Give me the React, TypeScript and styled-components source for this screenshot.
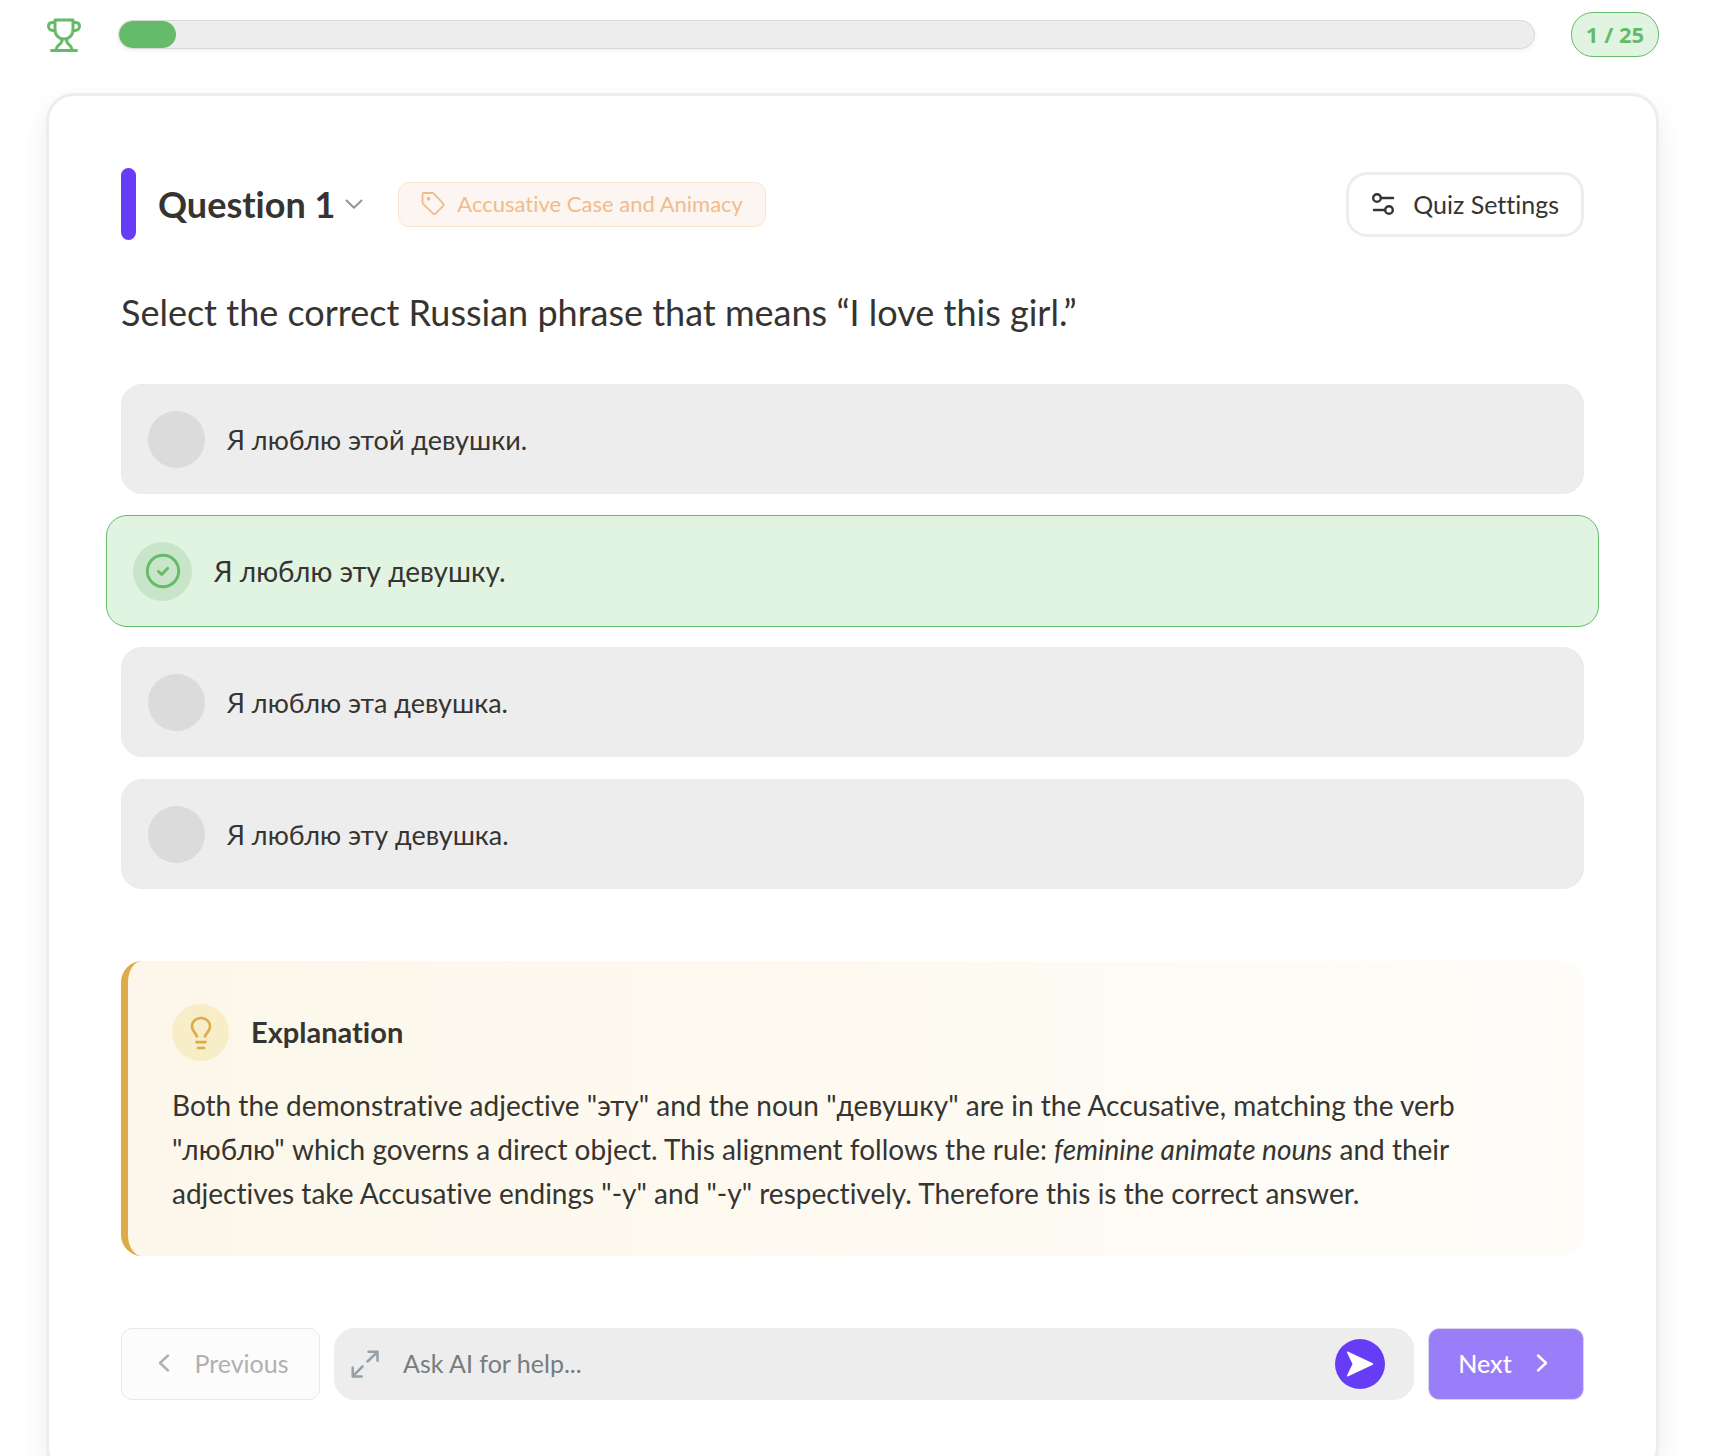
import React, { useState } from 'react';
import styled, { createGlobalStyle, css } from 'styled-components';

const colors = {
  ink: '#363430',
  muted: '#767c7f',
  purple: '#673cf6',
  purpleSoft: '#9a7df8',
  green: '#66bb6a',
  greenSoft: '#e1f4e2',
  grey: '#ededed',
  gold: '#dfab4a',
  peach: '#efbc8a',
};

const GlobalStyle = createGlobalStyle`
  *, *::before, *::after { box-sizing: border-box; }
  body {
    margin: 0;
    background: #fff;
    color: ${colors.ink};
    font-family: Lato, "Noto Sans", sans-serif;
    font-size: 28px;
    font-variant-ligatures: none;
  }
  button, input { font: inherit; font-variant-ligatures: none; color: inherit; }
  button { cursor: pointer; }
  svg { display: block; flex: none; }
`;

const Page = styled.main`
  height: 100vh;
  overflow: hidden;
  padding: 12px 50px 0 46px;
`;

const ProgressHeader = styled.header`
  display: flex;
  align-items: center;
  gap: 36px;
`;

const Track = styled.div`
  flex: 1;
  height: 29px;
  border: 1px solid #d9d9d9;
  border-radius: 15px;
  background: ${colors.grey};
  box-shadow: 0 2px 4px rgba(0, 0, 0, 0.06);
  overflow: hidden;
`;

const Fill = styled.div`
  height: 100%;
  border-radius: 14px;
  background: ${colors.green};
`;

const Counter = styled.span`
  display: grid;
  place-items: center;
  height: 45px;
  min-width: 88px;
  border: 1px solid ${colors.green};
  border-radius: 22px;
  background: ${colors.greenSoft};
  color: ${colors.green};
  font-family: "Noto Sans", sans-serif;
  font-size: 22px;
  line-height: 28px;
  font-weight: 700;
  padding-bottom: 2px;
`;

const Card = styled.section`
  margin-top: 36px;
  padding: 72px;
  border: 3px solid ${colors.grey};
  border-radius: 28px;
  box-shadow: 0 12px 26px rgba(40, 60, 40, 0.09);
`;

const CardHeader = styled.div`
  display: flex;
  align-items: center;
`;

const Accent = styled.span`
  width: 15px;
  height: 72px;
  border-radius: 8px;
  background: ${colors.purple};
`;

const Title = styled.h1`
  margin: 0 34px 0 22px;
  font-size: 36px;
  line-height: 44px;
`;

const TitleButton = styled.button`
  display: flex;
  align-items: center;
  gap: 9px;
  padding: 0;
  border: 0;
  background: none;
  font-weight: 700;
`;

const Topic = styled.span`
  display: flex;
  align-items: center;
  gap: 12px;
  height: 45px;
  padding: 0 22px 2px;
  border: 1px solid #fbe6cf;
  border-radius: 11px;
  background: #fdf5f2;
  color: ${colors.peach};
  font-size: 22px;
`;

const SettingsButton = styled.button`
  display: flex;
  align-items: center;
  gap: 18px;
  height: 65px;
  margin-left: auto;
  padding: 0 22px;
  border: 3px solid ${colors.grey};
  border-radius: 21px;
  background: #fff;
  font-size: 25px;
`;

const Question = styled.fieldset`
  min-width: 0;
  margin: 50px 0 72px;
  padding: 0;
  border: 0;
`;

const Prompt = styled.legend`
  padding: 0;
  margin: 0 0 50px;
  font-size: 36px;
  line-height: 44px;
`;

const Options = styled.div`
  display: grid;
  gap: 22px;
`;

const Option = styled.label<{ $correct: boolean }>`
  display: flex;
  align-items: center;
  gap: 22px;
  height: 110px;
  padding: 0 26px;
  border: 1px solid #e8ecee;
  border-radius: 21px;
  background: ${colors.grey};
  font-size: 27px;
  cursor: pointer;
  ${({ $correct }) =>
    $correct &&
    css`
      height: 112px;
      margin: -1px -15px -2px;
      border-color: ${colors.green};
      background: ${colors.greenSoft};
      font-size: 28px;
    `}
`;

const Marker = styled.span<{ $correct: boolean }>`
  display: grid;
  place-items: center;
  width: ${({ $correct }) => ($correct ? 59 : 57)}px;
  height: ${({ $correct }) => ($correct ? 59 : 57)}px;
  border-radius: 50%;
  background: ${({ $correct }) => ($correct ? '#c8e5ca' : '#dbdbdc')};
  color: ${colors.green};
  > * { grid-area: 1 / 1; }
`;

const Radio = styled.input`
  appearance: none;
  width: 100%;
  height: 100%;
  margin: 0;
  border-radius: 50%;
  cursor: pointer;
`;

const Explanation = styled.section`
  padding: 43px 44px 41px;
  border-left: 7px solid ${colors.gold};
  border-radius: 21px;
  background: linear-gradient(90deg, #fcf7ea, #fefaf1 50%, #fdfcf8);
`;

const ExplanationHeader = styled.div`
  display: flex;
  align-items: center;
  gap: 22px;
  margin-bottom: 22px;
`;

const BulbBadge = styled.span`
  display: grid;
  place-items: center;
  width: 57px;
  height: 57px;
  border-radius: 50%;
  background: #f7edc7;
  color: ${colors.gold};
`;

const ExplanationTitle = styled.h2`
  margin: 0;
  font-size: 29px;
  line-height: 36px;
  padding-bottom: 2px;
`;

const ExplanationText = styled.p`
  margin: 0;
  font-size: 28px;
  line-height: 44px;
`;

const Footer = styled.footer`
  display: flex;
  gap: 14px;
  height: 72px;
  margin-top: 72px;
  font-size: 25px;
`;

const NavButton = styled.button<{ $primary?: boolean }>`
  display: flex;
  align-items: center;
  justify-content: center;
  gap: 18px;
  width: ${({ $primary }) => ($primary ? 156 : 199)}px;
  padding: 0 0 2px;
  border: 1px solid ${({ $primary }) => ($primary ? '#d9d5ea' : '#e6e8e9')};
  border-radius: 11px;
  background: ${({ $primary }) => ($primary ? colors.purpleSoft : '#fcfcfc')};
  color: ${({ $primary }) => ($primary ? '#fff' : '#b0b0b0')};
  font-weight: ${({ $primary }) => ($primary ? 500 : 400)};
`;

const AskBox = styled.form`
  display: flex;
  align-items: center;
  flex: 1;
  min-width: 0;
  gap: 24px;
  padding: 0 29px 0 17px;
  border-radius: 21px;
  background: ${colors.grey};
`;

const IconButton = styled.button<{ $filled?: boolean }>`
  display: grid;
  place-items: center;
  flex: none;
  width: ${({ $filled }) => ($filled ? 50 : 28)}px;
  height: ${({ $filled }) => ($filled ? 50 : 28)}px;
  padding: 0;
  border: 0;
  border-radius: ${({ $filled }) => ($filled ? '50%' : '0')};
  background: ${({ $filled }) => ($filled ? colors.purple : 'none')};
  color: ${({ $filled }) => ($filled ? '#fff' : '#94a0a8')};
`;

const AskInput = styled.input`
  flex: 1;
  min-width: 0;
  height: 100%;
  padding: 0 0 2px;
  border: 0;
  outline: 0;
  background: none;
  &::placeholder { color: ${colors.muted}; opacity: 1; }
`;

const stroke = {
  fill: 'none',
  stroke: 'currentColor',
  strokeLinecap: 'round' as const,
  strokeLinejoin: 'round' as const,
  'aria-hidden': true,
};

const TrophyIcon = () => (
  <svg {...stroke} width="36" height="36" viewBox="0 0 36 36" stroke={colors.green} strokeWidth="3">
    <path d="M9 3h18v9.500c0 5.600-3.800 9.500-9 9.500s-9-3.900-9-9.500z" />
    <path d="M8.500 5.500H6.500C4 5.500 2.500 7 2.500 9.300s1.700 4.200 4.300 4.200h2M27.500 5.500h2c2.500 0 4 1.500 4 3.800s-1.700 4.200-4.300 4.200h-2" />
    <path d="M16 22.300c.5 5.500-5.500 5-6 10.200M20.500 22.300c-.5 5.500 5 5 5.500 10.200M5.500 33.500h25" />
  </svg>
);

const ChevronDown = () => (
  <svg {...stroke} width="20" height="20" viewBox="0 0 20 20" stroke="#92958f" strokeWidth="2">
    <path d="M2.500 6.500 10 13.800l7.500-7.300" />
  </svg>
);

const TagIcon = () => (
  <svg {...stroke} width="24" height="24" viewBox="0 0 24 24" strokeWidth="1.900">
    <path d="M1.500 3v8.300c0 .7.300 1.300.8 1.800l9.300 9c1 1 2.400 1 3.400 0l6.800-6.700c1-1 1-2.300 0-3.300l-9-9.400c-.5-.5-1.100-.7-1.800-.7H2.500c-.6 0-1 .4-1 1z" />
    <circle cx="7.500" cy="7.700" r=".9" fill="currentColor" />
  </svg>
);

const SlidersIcon = () => (
  <svg {...stroke} width="24" height="24" viewBox="0 0 24 24" strokeWidth="2.400">
    <circle cx="6" cy="6" r="3.800" />
    <path d="M10 6h12M3 18h11" />
    <circle cx="18" cy="18" r="3.800" />
  </svg>
);

const CheckIcon = () => (
  <svg {...stroke} width="36" height="36" viewBox="0 0 36 36" strokeWidth="2.900">
    <circle cx="18" cy="18" r="15.700" />
    <path d="m13.500 18.500 3.200 3 6-6.200" />
  </svg>
);

const BulbIcon = () => (
  <svg {...stroke} width="24" height="34" viewBox="0 0 24 34" strokeWidth="2.700">
    <path d="M8 20.500c-.8-3.300-5-5-5-10C3 5.500 6.800 2 12 2s9 3.500 9 8.500c0 5-4.200 6.700-5 10" />
    <path d="M7.500 26.200h9M9 32h6" />
  </svg>
);

const ExpandIcon = () => (
  <svg {...stroke} width="28" height="28" viewBox="0 0 28 28" strokeWidth="2.500">
    <path d="M16.500 11.500 26.500 1.800M17.500 1.700h9v9M11.500 16.500 1.700 26.300M1.700 17.500v9h9" />
  </svg>
);

const SendIcon = () => (
  <svg width="28" height="26" viewBox="0 0 28 26" fill="currentColor" aria-hidden>
    <path d="M1.800.6 26.300 12q2 1 0 2L1.800 25.400Q.6 25.800 1 24.500L6.500 13 1 1.500Q.6.200 1.800.6z" />
  </svg>
);

const Chevron = ({ right = false }: { right?: boolean }) => (
  <svg {...stroke} width="24" height="24" viewBox="0 0 24 24" strokeWidth="2.400">
    <path d={right ? 'm8 4.500 8 7.500-8 7.500' : 'M16 4.500 8 12l8 7.500'} />
  </svg>
);

const answers = [
  'Я люблю этой девушки.',
  'Я люблю эту девушку.',
  'Я люблю эта девушка.',
  'Я люблю эту девушка.',
];

export default function App() {
  const [selected, setSelected] = useState(1);
  const current = 1;
  const total = 25;

  return (
    <>
      <GlobalStyle />
      <Page>
        <ProgressHeader>
          <TrophyIcon />
          <Track role="progressbar" aria-label="Quiz progress" aria-valuemin={0} aria-valuemax={total} aria-valuenow={current}>
            <Fill style={{ width: `${(current / total) * 100}%` }} />
          </Track>
          <Counter>{`${current} / ${total}`}</Counter>
        </ProgressHeader>

        <Card>
          <CardHeader>
            <Accent />
            <Title>
              <TitleButton type="button">Question 1<ChevronDown /></TitleButton>
            </Title>
            <Topic><TagIcon />Accusative Case and Animacy</Topic>
            <SettingsButton type="button"><SlidersIcon />Quiz Settings</SettingsButton>
          </CardHeader>

          <Question>
            <Prompt>Select the correct Russian phrase that means “I love this girl.”</Prompt>
            <Options>
              {answers.map((answer, index) => (
                <Option key={answer} $correct={index === selected}>
                  <Marker $correct={index === selected}>
                    <Radio type="radio" name="answer" checked={index === selected} onChange={() => setSelected(index)} />
                    {index === selected && <CheckIcon />}
                  </Marker>
                  {answer}
                </Option>
              ))}
            </Options>
          </Question>

          <Explanation>
            <ExplanationHeader>
              <BulbBadge><BulbIcon /></BulbBadge>
              <ExplanationTitle>Explanation</ExplanationTitle>
            </ExplanationHeader>
            <ExplanationText>
              Both the demonstrative adjective "эту" and the noun "девушку" are in the Accusative, matching the verb
              "люблю" which governs a direct object. This alignment follows the rule: <em>feminine animate nouns</em> and
              their adjectives take Accusative endings "-у" and "-у" respectively. Therefore this is the correct answer.
            </ExplanationText>
          </Explanation>

          <Footer>
            <NavButton type="button"><Chevron />Previous</NavButton>
            <AskBox onSubmit={(event) => event.preventDefault()}>
              <IconButton type="button" aria-label="Expand"><ExpandIcon /></IconButton>
              <AskInput type="text" aria-label="Ask AI for help" placeholder="Ask AI for help..." />
              <IconButton $filled type="submit" aria-label="Send"><SendIcon /></IconButton>
            </AskBox>
            <NavButton $primary type="button">Next<Chevron right /></NavButton>
          </Footer>
        </Card>
      </Page>
    </>
  );
}
